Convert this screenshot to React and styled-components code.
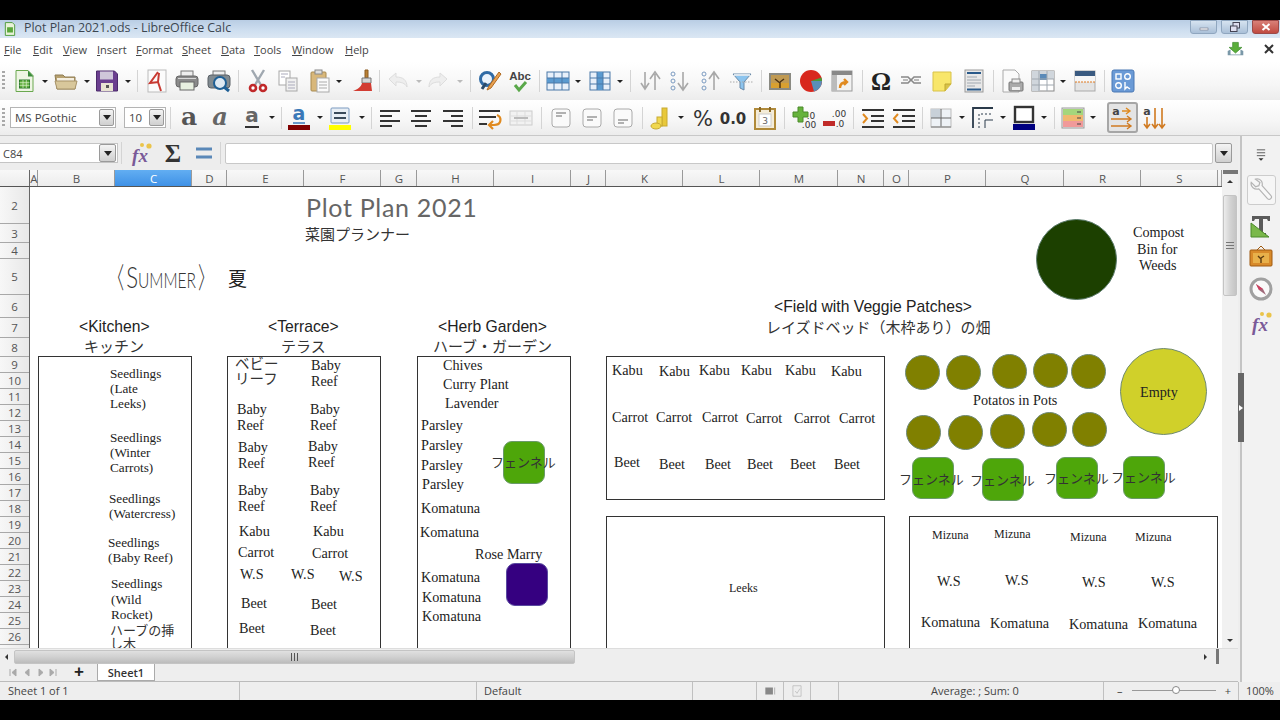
import React from 'react';
import styled, { createGlobalStyle } from 'styled-components';

const Global = createGlobalStyle`
  html, body { margin: 0; padding: 0; background: #000; }
  #root { width: 1280px; height: 720px; overflow: hidden; }
`;
const UI = `"Open Sans", "Noto Sans", sans-serif`;
const JP = `"Noto Sans CJK JP", sans-serif`;

const Page = styled.div`
  width: 1280px; height: 720px; display: flex; flex-direction: column;
  background: #000; font-family: ${UI}; color: #444; overflow: hidden;
`;
const Letterbox = styled.div` height: 20px; flex: none; background: #000; `;
const TitleBar = styled.div`
  height: 18px; flex: none; display: flex; align-items: center; position: relative;
  background: linear-gradient(180deg, #b9cde4 0%, #cfdff0 60%, #dbe7f3 100%);
  font-size: 12.4px; color: #3c4650; padding-left: 3px;
`;
const TitleText = styled.span` margin-left: 7px; margin-top: -3px; `;
const WinButtons = styled.div` margin-left: auto; display: flex; gap: 4px; align-self: flex-start; margin-right: 1px; `;
const WinButton = styled.div`
  width: 27px; height: 14px; border: 1px solid ${p => (p.$close ? '#9c4a48' : '#8fa6bf')}; box-sizing: border-box;
  border-radius: 0 0 3px 3px; display: flex; align-items: center; justify-content: center;
  background: ${p => (p.$close ? 'linear-gradient(180deg,#d98078,#c04a40)' : 'linear-gradient(180deg,#d6e3f0,#aac0d8)')};
`;
const MenuBar = styled.div`
  height: 24px; flex: none; background: #fff; display: flex; align-items: center; font-size: 11px; color: #444;
  padding-bottom: 2px; box-sizing: border-box;
`;
const MenuItem = styled.span`
  width: ${p => p.$w}px; flex: none;
  &::first-letter { text-decoration: underline; }
`;
const MenuEnd = styled.div` margin-left: auto; display: flex; align-items: center; gap: 17px; padding-right: 3px; `;
const ToolRow = styled.div`
  height: ${p => p.$h}px; flex: none; display: flex; align-items: center;
  background: linear-gradient(180deg, #ffffff 0%, #f6f6f6 60%, #ececec 100%);
  border-bottom: ${p => (p.$last ? '1px solid #c8c8c8' : 'none')}; box-sizing: border-box;
`;
const Slot = styled.div`
  flex: none; display: flex; align-items: center; justify-content: center;
  width: ${p => p.$w}px; margin-left: ${p => p.$ml}px;
`;
const Grip = styled.div`
  width: 3px; height: 20px;
  background: repeating-linear-gradient(180deg, #a8a8a8 0 2px, transparent 2px 4px);
`;
const Sep = styled.div` width: 1px; height: 22px; background: #d4d4d4; `;
const Caret = styled.div`
  width: 0; height: 0; border-left: 3px solid transparent; border-right: 3px solid transparent;
  border-top: 3px solid ${p => (p.$dim ? '#bbb' : '#222')};
`;
const Combo = styled.div`
  width: ${p => p.$w}px; height: 21px; box-sizing: border-box; border: 1px solid #b4b4b4; background: #fff;
  display: flex; align-items: center; justify-content: space-between; font-size: 11.5px; color: #444;
  padding: 0 1px 0 4px;
`;
const DropBtn = styled.div`
  width: ${p => p.$w || 15}px; height: ${p => p.$h || 17}px; flex: none; box-sizing: border-box; border: 1px solid #9a9a9a; border-radius: 2px;
  background: linear-gradient(180deg, #f4f4f4, #cfcfcf); display: flex; align-items: center; justify-content: center;
`;
const DropTri = styled.div`
  width: 0; height: 0; border-left: 4px solid transparent; border-right: 4px solid transparent; border-top: 5px solid #222;
`;
const Active = styled.div`
  width: 31px; height: 31px; box-sizing: border-box; border: 2px solid #a6a6a6; border-radius: 3px; background: #e4e4e4;
  display: flex; align-items: center; justify-content: center;
`;
const Work = styled.div` flex: none; height: 546px; display: flex; background: #eee; `;
const MainCol = styled.div` width: 1238px; flex: none; display: flex; flex-direction: column; `;
const FormulaBar = styled.div`
  height: 34px; flex: none; display: flex; align-items: center; background: #ededed;
`;
const NameBox = styled.div`
  width: 118px; height: 20px; flex: none; box-sizing: border-box; border: 1px solid #c4c4c4; border-left: none; background: #fff;
  display: flex; align-items: center; justify-content: space-between; padding-left: 3px; padding-right: 1px; font-size: 11px; color: #444;
`;
const FormulaInput = styled.div`
  width: 988px; height: 21px; flex: none; margin-left: 4px; box-sizing: border-box; border: 1px solid #c8c8c8; border-radius: 2px; background: #fff;
`;
const SheetRow = styled.div` flex: 1; min-height: 0; display: flex; `;
const SheetCol = styled.div` width: 1222px; flex: none; display: flex; flex-direction: column; `;
const ColHeaders = styled.div`
  height: 17px; flex: none; display: flex; background: linear-gradient(180deg, #f8f8f8, #ececec); border-bottom: 1px solid #555; box-sizing: border-box;
`;
const Corner = styled.div` width: 30px; flex: none; border-right: 1px solid #666; box-sizing: border-box; `;
const ColCell = styled.div`
  width: ${p => p.$w}px; flex: none; box-sizing: border-box; border-right: 1px solid #9a9a9a; padding-left: 1px;
  display: flex; align-items: center; justify-content: center; font-size: 11.5px;
  color: ${p => (p.$on ? '#fff' : '#555')};
  background: ${p => (p.$on ? 'linear-gradient(180deg,#62aef2,#3f91e6)' : 'transparent')};
`;
const SheetBody = styled.div` flex: 1; min-height: 0; display: flex; `;
const RowHeaders = styled.div`
  width: 30px; flex: none; box-sizing: border-box; overflow: hidden; border-right: 1px solid #666;
  background: linear-gradient(90deg, #f7f7f7, #e8e8e8);
`;
const RowCell = styled.div`
  height: ${p => p.$h}px; box-sizing: border-box; border-bottom: 1px solid #a8a8a8;
  display: flex; align-items: center; justify-content: center; font-size: 11.5px; color: #555;
`;
const Canvas = styled.div` flex: 1; position: relative; overflow: hidden; background: #fff; `;
const Box = styled.div`
  position: absolute; left: ${p => p.$x}px; top: ${p => p.$y}px; width: ${p => p.$w}px; height: ${p => p.$h}px;
  box-sizing: border-box; border: 1px solid #333; background: #fff;
`;
const Circle = styled.div`
  position: absolute; left: ${p => p.$cx - p.$r}px; top: ${p => p.$cy - p.$r}px; width: ${p => 2 * p.$r}px; height: ${p => 2 * p.$r}px;
  box-sizing: border-box; border-radius: 50%; background: ${p => p.$c}; border: 1px solid ${p => p.$b};
`;
const Pot = styled.div`
  position: absolute; left: ${p => p.$x}px; top: ${p => p.$y}px; width: ${p => p.$w}px; height: ${p => p.$h}px;
  box-sizing: border-box; border-radius: 9px; background: ${p => p.$c}; border: 1px solid ${p => p.$b};
`;
const KIND = {
  serif: `font: 14.2px/16px "Liberation Serif", serif; color: #222;`,
  seed: `font: 13.2px/15px "Liberation Serif", serif; color: #222;`,
  small: `font: 12px/16px "Liberation Serif", serif; color: #222;`,
  sans: `font: 15.7px/18px "Liberation Sans", sans-serif; color: #222;`,
  jp: `font: 400 14.5px/14px ${JP}; color: #333;`,
  jps: `font: 400 13px/13px ${JP}; color: #333;`,
  jpl: `font: 400 15px/18px ${JP}; color: #333;`,
  jpx: `font: 400 19px/22px ${JP}; color: #222;`,
  head: `font: 400 25px/30px "Lato", sans-serif; color: #666; letter-spacing: .7px;`,
};
const Label = styled.div`
  position: absolute; left: ${p => p.$x}px; top: ${p => p.$y}px; white-space: nowrap;
  transform: translateY(-50%); ${p => KIND[p.$k]}
`;
const Summer = styled.div`
  position: absolute; left: 74px; top: 89px; white-space: nowrap; transform-origin: left center;
  transform: translateY(-50%) scaleX(.74); font: 300 30px/32px "Lato", sans-serif; color: #333;
  font-variant: small-caps;
`;
const VScroll = styled.div`
  width: 16px; flex: none; background: #f1f1f1; display: flex; flex-direction: column; align-items: center; position: relative;
`;
const SplitMark = styled.div` width: 15px; height: 4px; background: #777; flex: none; `;
const Arrow = styled.div`
  width: 0; height: 0; flex: none;
  border-left: 3px solid transparent; border-right: 3px solid transparent;
  ${p => (p.$dir === 'up' ? 'border-bottom: 3px solid #333;' : 'border-top: 3px solid #333;')}
  margin: ${p => p.$m};
`;
const VThumb = styled.div`
  width: 14px; height: 101px; flex: none; box-sizing: border-box; border: 1px solid #c4c4c4; border-radius: 2px;
  background: linear-gradient(90deg, #ececec, #d4d4d4 50%, #c4c4c4);
  display: flex; align-items: center; justify-content: center;
`;
const VTrack = styled.div` flex: 1; `;
const Handle = styled.div`
  position: absolute; right: -6px; top: 203px; width: 6px; height: 69px; background: #666; z-index: 2;
  display: flex; align-items: center; justify-content: center;
  &::after { content: ''; border-left: 4px solid #fff; border-top: 3px solid transparent; border-bottom: 3px solid transparent; }
`;
const HScroll = styled.div`
  height: 16px; flex: none; display: flex; align-items: center; background: #eee; border-top: 1px solid #ddd; box-sizing: border-box;
`;
const HArrow = styled.div`
  width: 0; height: 0; flex: none; border-top: 3px solid transparent; border-bottom: 3px solid transparent;
  ${p => (p.$dir === 'l' ? 'border-right: 3px solid #333;' : 'border-left: 3px solid #333;')}
  margin-left: ${p => p.$ml}px;
`;
const HThumb = styled.div`
  width: 561px; height: 14px; flex: none; margin-left: 6px; box-sizing: border-box; border: 1px solid #c4c4c4; border-radius: 2px;
  background: linear-gradient(180deg, #e0e0e0, #d0d0d0 50%, #bcbcbc);
  display: flex; align-items: center; justify-content: center;
`;
const SplitBar = styled.div` width: 3px; height: 15px; background: #777; margin-left: 9px; flex: none; `;
const TabRow = styled.div`
  height: 18px; flex: none; display: flex; align-items: flex-start; background: #eee; border-bottom: 1px solid #bbb; box-sizing: border-box; position: relative;
`;
const Nav = styled.svg` width: 60px; height: 17px; flex: none; margin-left: 6px; `;
const Plus = styled.div` width: 24px; margin-left: 1px; flex: none; text-align: center; font: 700 17px/16px "Liberation Sans", sans-serif; color: #222; `;
const Tab = styled.div`
  width: 58px; height: 17px; flex: none; margin-left: 6px; box-sizing: border-box; background: #fff; border: 1px solid #aaa; border-top: none;
  display: flex; align-items: center; justify-content: center; font-size: 11px; font-weight: 600; color: #333;
`;
const Side = styled.div`
  flex: 1; box-sizing: border-box; border-left: 2px solid #c4c4c4; margin-left: 2px; background: #f2f2f2; position: relative;
  display: flex; flex-direction: column; align-items: center; padding-top: 8px;
`;
const SideIcon = styled.div`
  width: ${p => p.$boxed ? 29 : 26}px; height: ${p => p.$h}px; box-sizing: border-box; margin-top: ${p => p.$mt}px; flex: none;
  display: flex; align-items: center; justify-content: center;
  ${p => p.$boxed && 'border: 1px solid #ccc; border-radius: 3px; background: #f6f6f6;'}
`;
const StatusBar = styled.div`
  height: 18px; flex: none; display: flex; align-items: center; background: #eee; font-size: 11px; color: #444;
`;
const StatusCell = styled.div`
  width: ${p => p.$w}px; flex: none; height: 100%; box-sizing: border-box; display: flex; align-items: center; justify-content: ${p => p.$c ? 'center' : 'flex-start'};
  padding-left: ${p => p.$pl || 0}px; padding-bottom: 1px; border-right: ${p => (p.$noBorder ? 'none' : '1px solid #c0c0c0')};
`;
const ZoomTrack = styled.div` flex: 1; height: 1px; background: #999; position: relative; margin: 0 9px; `;
const ZoomKnob = styled.div`
  position: absolute; left: 40px; top: -4px; width: 8px; height: 8px; border-radius: 50%; border: 1px solid #888; background: #fff; box-sizing: border-box;
`;
const ZoomGap = styled.span` width: 7px; flex: none; `;
const IconSvg = styled.svg` overflow: visible; flex: none; `;

/* ---------- icons ---------- */
const Svg = ({ s = 24, children }) => <IconSvg width={s} height={s} viewBox="0 0 24 24" fill="none">{children}</IconSvg>;
const lines = (arr, c = '#333', w = 2) => arr.map(([x1, y, x2], i) => <path key={i} d={`M${x1} ${y}H${x2}`} stroke={c} strokeWidth={w} />);
const A = ({ x = 12, y = 15, c = '#666', style = 'normal', w = 700, s = 19, f = 'DejaVu Sans, sans-serif' }) => (
  <text x={x} y={y} textAnchor="middle" fontSize={s} fontWeight={w} fontStyle={style} fontFamily={f} fill={c}>a</text>
);
const I = {
  newDoc: <><path d="M3 1.5h12l5 5v16H3z" fill="#eef5e4" stroke="#6aa84f" /><path d="M15 1.5v6h5.5z" fill="#3c8c3c" /><rect x="6.5" y="11" width="10" height="8" fill="#5fae3c" stroke="#2c7a2c" /><path d="M6.5 13.7h10M6.5 16.3h10M10 11v8M13.3 11v8" stroke="#dff0d0" strokeWidth=".7" /></>,
  open: <><path d="M1 6h8l2 2h10v12H3z" fill="#b7a16f" stroke="#8f7d54" /><path d="M3 9h17v4H3z" fill="#f4eee0" /><path d="M1 12h22l-2 8H3z" fill="#d8c79b" stroke="#a79369" /></>,
  save: <><path d="M1.5 2h18l3 3v17h-21z" fill="#6b3f8f" stroke="#4b2a6b" /><rect x="5" y="2.5" width="13" height="8" fill="#cfc6da" /><rect x="6" y="14" width="12" height="8" fill="#e8e3d2" /><rect x="11" y="16" width="3" height="3" fill="#555" /></>,
  pdf: <><rect x="3" y="1" width="18" height="22" fill="#fbfbfb" stroke="#bbb" /><path d="M13 3 5 14l9-1M14 4l-1 9 3 9" stroke="#c83a32" strokeWidth="2" /></>,
  print: <><rect x="6" y="2" width="12" height="6" fill="#eee" stroke="#777" /><rect x="1" y="7" width="22" height="11" rx="3" fill="#8a8a8a" stroke="#666" /><rect x="5" y="13" width="14" height="8" fill="#e8f0e0" stroke="#666" /><path d="M3 9.5h18" stroke="#d8d8d8" /></>,
  preview: <><rect x="6" y="2" width="12" height="6" fill="#eee" stroke="#777" /><rect x="1" y="6" width="22" height="13" rx="3" fill="#808a90" stroke="#5a6066" /><circle cx="13" cy="14" r="6" fill="#dde8f2" stroke="#1e5f95" strokeWidth="2" /><path d="M17 18l5 4" stroke="#1e5f95" strokeWidth="3" /></>,
  cut: <><path d="M6 1l9 15M18 1L9 16" stroke="#a0a8b0" strokeWidth="2.4" /><circle cx="7" cy="19" r="3" fill="#fff" stroke="#c0282a" strokeWidth="2.6" /><circle cx="17" cy="19" r="3" fill="#fff" stroke="#c0282a" strokeWidth="2.6" /></>,
  copy: <><rect x="3" y="2" width="11" height="14" fill="#fff" stroke="#a8a8a8" /><rect x="10" y="9" width="11" height="13" fill="#f0f0f0" stroke="#a8a8a8" /><path d="M5 5h7M5 8h4M12 13h7M12 16h7M12 19h7" stroke="#aab" /></>,
  paste: <><rect x="3" y="3" width="15" height="19" rx="1" fill="#d8b77a" stroke="#a88a50" /><rect x="7" y="1" width="7" height="4" fill="#ddd" stroke="#888" /><rect x="9" y="9" width="12" height="14" fill="#fafafa" stroke="#aaa" /><path d="M11 13h8M11 16h8M11 19h8" stroke="#aaa" /></>,
  brush: <><path d="M15 1h3v8h-3z" fill="#b98035" stroke="#8a5a20" /><path d="M12 9h9v5h-9z" fill="#d6d6d6" stroke="#777" /><path d="M12 14h9l1 8H3c5-2 8-4 9-8z" fill="#d23c32" /></>,
  undo: <><path d="M3 10l7-6v4c7 0 11 3 11 10-2-4-6-5-11-5v4z" fill="#eee" stroke="#ddd" /></>,
  redo: <><path d="M21 10l-7-6v4C7 8 3 11 3 18c2-4 6-5 11-5v4z" fill="#eee" stroke="#ddd" /></>,
  find: <><circle cx="9" cy="10" r="6.5" fill="#eaf2fb" stroke="#2f6aa5" strokeWidth="3" /><path d="M4 20l4-6" stroke="#2a4a6a" strokeWidth="3" /><path d="M21 3 11 17l-2 4 4-2L23 5z" fill="#e8a050" stroke="#b06a20" /></>,
  spell: <><text x="12" y="11" textAnchor="middle" fontSize="11.5" fontWeight="700" fontFamily="Liberation Sans, sans-serif" fill="#444">Abc</text><path d="M7 16l4 5 7-8" stroke="#5aa84a" strokeWidth="3" /></>,
  rows: <><rect x="1" y="3" width="22" height="18" fill="#e8f0fa" stroke="#4a78a8" /><rect x="1" y="9" width="22" height="5" fill="#5a9ad0" /><path d="M1 9h22M1 14h22M8 3v18M16 3v18" stroke="#4a78a8" /></>,
  cols: <><rect x="2" y="3" width="20" height="18" fill="#e8f0fa" stroke="#4a78a8" /><rect x="9" y="3" width="6" height="18" fill="#5a9ad0" /><path d="M2 9h20M2 15h20M9 3v18M15 3v18" stroke="#4a78a8" /></>,
  sort: <><path d="M7 3v16M3 14l4 6 4-6" stroke="#a8a8a8" strokeWidth="1.6" /><path d="M17 21V5M12 10l5-7 5 7" stroke="#a8a8a8" strokeWidth="1.6" /></>,
  sortD: <><circle cx="5" cy="5" r="2" stroke="#7a9ac0" /><circle cx="5" cy="12" r="2" stroke="#7a9ac0" /><circle cx="5" cy="19" r="2" stroke="#7a9ac0" /><path d="M15 3v17M10 14l5 7 5-7" stroke="#a8a8a8" strokeWidth="1.6" /></>,
  sortA: <><circle cx="5" cy="5" r="2" stroke="#7a9ac0" /><circle cx="5" cy="12" r="2" stroke="#7a9ac0" /><circle cx="5" cy="19" r="2" stroke="#7a9ac0" /><path d="M15 21V4M10 10l5-7 5 7" stroke="#a8a8a8" strokeWidth="1.6" /></>,
  filter: <><path d="M3 5h18l-7 8v8l-4-2v-6z" fill="#8cc4ee" stroke="#6a8aa8" /><path d="M0 13h24" stroke="#aaa" strokeDasharray="1.5 1.5" /><rect x="4" y="5" width="16" height="2" fill="#d8e4ee" /></>,
  image: <><rect x="1" y="4" width="22" height="17" fill="#8a8a82" /><rect x="3" y="6" width="18" height="13" fill="#c09a52" /><rect x="3" y="14" width="18" height="5" fill="#d8a030" /><path d="M12 19v-6M12 14l-5-4M12 13l4-3" stroke="#4a3010" strokeWidth="1.4" /></>,
  chart: <><circle cx="12" cy="12" r="11" fill="#d8271d" /><path d="M12 12h11a11 11 0 0 1-8 10.6z" fill="#5a8fb8" /><path d="M12 12h11a11 11 0 0 0-.6-3.5z" fill="#4a9a3a" /></>,
  pivot: <><rect x="2" y="2" width="20" height="20" fill="#f2f2f2" stroke="#999" /><rect x="2" y="2" width="20" height="4" fill="#888" /><rect x="2" y="6" width="5" height="16" fill="#bbb" /><path d="M10 19c0-4 2-6 7-6M14 10l3 3-3 3" stroke="#e08a20" strokeWidth="2.4" /></>,
  omega: <text x="12" y="21" textAnchor="middle" fontSize="25" fontWeight="700" fontFamily="Liberation Serif, serif" fill="#222">Ω</text>,
  link: <><path d="M2 8h7l3 3 3-3h7M2 14h7l3-3 3 3h7" stroke="#888" strokeWidth="1.6" /><path d="M4 11h5M15 11h5" stroke="#bbb" strokeWidth="2" /></>,
  note: <><path d="M3 3h18v12l-6 7H3z" fill="#f8e66a" stroke="#d8c24a" /><path d="M15 22v-7h6" fill="#d8c24a" stroke="#c0a830" /></>,
  header: <><rect x="3" y="1" width="18" height="22" fill="#e8e8e8" stroke="#999" /><path d="M5 4h14" stroke="#2a5a8a" strokeWidth="2" /><path d="M5 8h10M5 11h14M5 14h14M5 17h8" stroke="#a0a8b0" /><path d="M5 20.5h14" stroke="#2a5a8a" strokeWidth="2" /></>,
  docs: <><path d="M3 1h12l4 4v18H3z" fill="#fafafa" stroke="#aaa" /><rect x="9" y="13" width="14" height="9" rx="1" fill="#aaa" stroke="#777" /><rect x="12" y="10" width="8" height="4" fill="#eee" stroke="#888" /><rect x="12" y="18" width="8" height="3" fill="#eee" /></>,
  freeze: <><rect x="1" y="2" width="22" height="20" fill="#fff" stroke="#888" /><rect x="1" y="2" width="8" height="20" fill="#d0d6dc" /><rect x="1" y="2" width="22" height="8" fill="#d0d6dc" /><rect x="9" y="5" width="7" height="6" fill="#5a8ab8" /><path d="M8 2v20M16 2v20M1 10h22M1 16h22" stroke="#a0a8b0" /></>,
  split: <><rect x="2" y="2" width="20" height="20" fill="#e4e4e4" stroke="#aaa" /><rect x="2" y="2" width="20" height="5" fill="#3a5a80" /><rect x="2" y="7" width="20" height="6" fill="#f6f6f6" /><path d="M2 13h20" stroke="#e07a20" strokeDasharray="2 1" /></>,
  shapes: <><rect x="1" y="1" width="22" height="22" rx="2" fill="#6a9ad6" stroke="#4a78b4" /><rect x="5" y="5" width="5" height="5" fill="none" stroke="#fff" strokeWidth="1.4" /><circle cx="16.5" cy="7.5" r="2.8" stroke="#fff" strokeWidth="1.4" /><circle cx="7.5" cy="16.5" r="2.8" stroke="#fff" strokeWidth="1.4" /><path d="M14 13v7l2-2 3 2" stroke="#fff" strokeWidth="1.4" /></>,
  bold: <A c="#555" s={25} w={700} y={19} f="DejaVu Serif, serif" />,
  italic: <A c="#666" style="italic" w={700} s={24} y={19} f="DejaVu Serif, serif" />,
  under: <><A c="#666" s={20} y={16} f="DejaVu Sans, sans-serif" w={700} /><path d="M5 21h14" stroke="#333" strokeWidth="2" /></>,
  fcolor: <><A c="#3a78b8" s={19} y={14} /><path d="M6 17h12" stroke="#3a78b8" strokeWidth="1.5" /><rect x="1" y="19" width="22" height="5" fill="#800000" /></>,
  hl: <><rect x="3" y="2" width="18" height="15" rx="1" fill="#e8eef4" stroke="#7a9ac0" /><path d="M6 7h12M6 12h12" stroke="#3a4a5a" strokeWidth="2" /><rect x="1" y="19" width="22" height="5" fill="#ffff00" /></>,
  alignL: lines([[2, 5, 22], [2, 10, 14], [2, 15, 22], [2, 20, 14]]),
  alignC: lines([[2, 5, 22], [6, 10, 18], [2, 15, 22], [6, 20, 18]]),
  alignR: lines([[2, 5, 22], [10, 10, 22], [2, 15, 22], [10, 20, 22]]),
  wrap: <>{lines([[1, 5, 22], [1, 11, 18], [1, 18, 9]])}<path d="M19 9c5 2 5 10-3 10h-4M15 15l-4 4 4 4" stroke="#e08a20" strokeWidth="2.2" /></>,
  merge: <><rect x="1" y="5" width="22" height="14" fill="#f2f2f2" stroke="#ccc" /><path d="M1 10h22M1 15h22M8 5v14M16 5v14" stroke="#ddd" /><path d="M5 12h14" stroke="#bbb" strokeWidth="2" /></>,
  vtop: <><rect x="3" y="3" width="18" height="18" rx="3" fill="#fafafa" stroke="#aaa" /><path d="M7 7h10M7 10h6" stroke="#999" strokeWidth="1.4" /></>,
  vmid: <><rect x="3" y="3" width="18" height="18" rx="3" fill="#fafafa" stroke="#aaa" /><path d="M7 11h10M7 14h6" stroke="#999" strokeWidth="1.4" /></>,
  vbot: <><rect x="3" y="3" width="18" height="18" rx="3" fill="#fafafa" stroke="#aaa" /><path d="M7 14h10M7 17h6" stroke="#999" strokeWidth="1.4" /></>,
  coins: <><rect x="13" y="2" width="5" height="18" fill="#e8c83a" stroke="#c8aa30" /><rect x="8" y="11" width="5" height="9" fill="#f0d850" stroke="#c8aa30" /><ellipse cx="7" cy="20" rx="5" ry="3" fill="#f0d850" stroke="#c8aa30" /></>,
  percent: <text x="12" y="20" textAnchor="middle" fontSize="21" fontFamily="DejaVu Sans, sans-serif" fill="#333">%</text>,
  zero: <text x="12" y="18" textAnchor="middle" fontSize="15" fontWeight="700" fontFamily="DejaVu Sans, sans-serif" fill="#333">0.0</text>,
  date: <><rect x="2" y="3" width="20" height="20" fill="#f4ecd8" stroke="#b08a3a" strokeWidth="2" /><rect x="6" y="8" width="12" height="12" fill="#fff" stroke="#ccc" /><path d="M7 1v5M17 1v5" stroke="#8a6a2a" strokeWidth="2" /><text x="12" y="18" textAnchor="middle" fontSize="9" fontFamily="DejaVu Sans, sans-serif" fill="#666">3</text></>,
  addDec: <><path d="M8 1h5v5h5v5h-5v5H8v-5H3V6h5z" fill="#66b33c" stroke="#4a8a2a" /><text x="21" y="13" textAnchor="middle" fontSize="9" fontFamily="DejaVu Sans, sans-serif" fill="#333">.0</text><text x="19" y="22" textAnchor="middle" fontSize="9" fontFamily="DejaVu Sans, sans-serif" fill="#333">.00</text></>,
  delDec: <><rect x="2" y="15" width="12" height="5" fill="#c02a28" /><text x="18" y="11" textAnchor="middle" fontSize="9" fontFamily="DejaVu Sans, sans-serif" fill="#333">.00</text><text x="19" y="21" textAnchor="middle" fontSize="9" fontFamily="DejaVu Sans, sans-serif" fill="#333">.0</text></>,
  indent: <>{lines([[1, 4, 23], [10, 10, 23], [10, 15, 23], [1, 21, 23]])}<path d="M2 8l4 4.5-4 4.5" stroke="#e08a20" strokeWidth="2" /></>,
  outdent: <>{lines([[1, 4, 23], [10, 10, 23], [10, 15, 23], [1, 21, 23]])}<path d="M6 8l-4 4.5 4 4.5" stroke="#e08a20" strokeWidth="2" /></>,
  borders: <><rect x="2" y="3" width="20" height="18" fill="#eef2f6" stroke="#bbb" /><rect x="2" y="3" width="9" height="9" fill="#c8d0d8" /><path d="M12 3v18M2 12h20" stroke="#666" /><path d="M2 21h20" stroke="#999" strokeWidth="1.5" /></>,
  bstyle: <><path d="M2 22V2h20" stroke="#2a3a4a" strokeWidth="1.8" /><path d="M8 22V8h14" stroke="#2a3a4a" strokeDasharray="2 2" /><path d="M14 22v-8h8" stroke="#2a3a4a" /></>,
  bcolor: <><rect x="3" y="1" width="18" height="15" fill="#fff" stroke="#333" strokeWidth="2.4" /><rect x="1" y="18" width="22" height="6" fill="#000080" /></>,
  cond: <><rect x="1" y="2" width="22" height="20" fill="#eee" stroke="#999" /><rect x="2" y="3" width="20" height="6" fill="#a4d67c" /><rect x="2" y="9" width="20" height="6" fill="#f0b870" /><rect x="2" y="15" width="20" height="6" fill="#f09a9a" /><path d="M16 6h4M16 12h4M16 18h4" stroke="#444" /></>,
  sortH: <><A x={6} y={9} s={11} c="#444" /><path d="M12 5h7M16 2l4 3-4 3" stroke="#e08a20" strokeWidth="1.4" /><path d="M1 13h20M17 10l4 3-4 3M1 20h20M17 17l4 3-4 3" stroke="#d07a20" strokeWidth="1.4" /></>,
  sortV: <><A x={5} y={9} s={11} c="#444" /><path d="M5 11v11M2 18l3 4 3-4M13 2v20M10 18l3 4 3-4M20 2v20M17 18l3 4 3-4" stroke="#d07a20" strokeWidth="1.6" /></>,
  wrench: <><path d="M3 5l4 4 3-1 1-3-4-3c4-1 7 2 6 6l8 9c2 2-1 5-3 3l-8-9C6 12 2 9 3 5z" fill="#f8f8f8" stroke="#b4b4b4" strokeWidth="1.1" /></>,
  styleT: <><path d="M5 2h16v5h-2l-1-2h-4v14h3v3H7v-3h3V5H6L5 7H3V2z" fill="#5a5a5a" /><path d="M2 9l18 14H2z" fill="#7ab84a" stroke="#4a8a2a" /></>,
  gallery: <><rect x="1" y="6" width="22" height="16" rx="1" fill="#d88a2a" stroke="#a05a10" /><rect x="4" y="9" width="16" height="10" fill="#e8b04a" /><path d="M12 19v-5M12 15l-3-3M12 14l3-2" stroke="#5a3a10" strokeWidth="1.4" /><path d="M8 6l4-4 4 4" stroke="#a05a10" /></>,
  compass: <><circle cx="12" cy="12" r="10" fill="#fafafa" stroke="#a0a0a0" strokeWidth="3" /><path d="M7 7l7 5 3 6-7-5z" fill="#a06a7a" /><path d="M7 7l7 5-4 1z" fill="#d04060" /></>,
  fx: <><text x="11" y="21" textAnchor="middle" fontSize="19" fontStyle="italic" fontWeight="700" fontFamily="Liberation Serif, serif" fill="#7a5a98">fx</text><circle cx="13" cy="4" r="2" fill="#eac44a" /><circle cx="20" cy="5" r="2.6" fill="#eac44a" /></>,
  menuLines: <><path d="M7 7h10M7 10.5h10M7 14h10" stroke="#444" /><path d="M12 20l-3-3h6z" fill="#333" /></>,
  install: <><path d="M8 2h8v7h5l-9 8-9-8h5z" fill="#5aae3a" stroke="#3a8a2a" /><path d="M1 14l4-2v7h14v-7l4 2v6H1z" fill="#7a98a8" /></>,
  closeX: <path d="M6 6l12 12M18 6L6 18" stroke="#333" strokeWidth="3" />,
};
const W = { grip: 3, sep: 1, caret: 6, dim: 6 };
const T1 = [['grip', 3], ['newDoc', 25], ['caret', 45], ['open', 66], ['caret', 87], ['save', 107], ['caret', 128], ['sep', 137], ['pdf', 157], ['print', 187], ['preview', 219], ['sep', 238], ['cut', 258], ['copy', 288], ['paste', 320], ['caret', 339], ['brush', 362], ['sep', 379], ['undo', 398], ['dim', 419], ['redo', 438], ['dim', 460], ['sep', 470], ['find', 490], ['spell', 520], ['sep', 539], ['rows', 558], ['caret', 578], ['cols', 600], ['caret', 620], ['sep', 630], ['sort', 650], ['sortD', 680], ['sortA', 711], ['filter', 742], ['sep', 761], ['image', 780], ['chart', 811], ['pivot', 842], ['sep', 862], ['omega', 881], ['link', 911], ['note', 942], ['header', 974], ['sep', 993], ['docs', 1012], ['freeze', 1043], ['caret', 1063], ['split', 1085], ['sep', 1104], ['shapes', 1123]];
const T2 = [['grip', 3], ['font', 63], ['size', 145], ['sep', 170], ['bold', 189], ['italic', 220], ['under', 252], ['caret', 272], ['sep', 281], ['fcolor', 299], ['caret', 320], ['hl', 340], ['caret', 362], ['sep', 371], ['alignL', 390], ['alignC', 421], ['alignR', 453], ['sep', 472], ['wrap', 490], ['merge', 521], ['sep', 541], ['vtop', 561], ['vmid', 592], ['vbot', 623], ['sep', 642], ['coins', 661], ['caret', 681], ['percent', 703], ['zero', 733], ['date', 765], ['sep', 784], ['addDec', 802], ['delDec', 833], ['sep', 853], ['indent', 873], ['outdent', 904], ['sep', 922], ['borders', 941], ['caret', 962], ['bstyle', 983], ['caret', 1003], ['bcolor', 1024], ['caret', 1044], ['sep', 1054], ['cond', 1073], ['caret', 1093], ['active', 1122], ['sortV', 1154]];
const widthOf = k => (W[k] ? W[k] : k === 'font' ? 106 : k === 'size' ? 42 : k === 'active' ? 31 : 24);
const renderTool = k => {
  if (k === 'grip') return <Grip />;
  if (k === 'sep') return <Sep />;
  if (k === 'caret') return <Caret />;
  if (k === 'dim') return <Caret $dim />;
  if (k === 'font') return <Combo $w={106}>MS PGothic<DropBtn><DropTri /></DropBtn></Combo>;
  if (k === 'size') return <Combo $w={42}>10<DropBtn><DropTri /></DropBtn></Combo>;
  if (k === 'active') return <Active><Svg>{I.sortH}</Svg></Active>;
  return <Svg>{I[k]}</Svg>;
};
const Tools = ({ items }) => {
  let right = 0;
  return items.map(([k, c], i) => {
    const w = widthOf(k);
    const ml = c - w / 2 - right;
    right = c + w / 2;
    return <Slot key={i} $w={w} $ml={ml}>{renderTool(k)}</Slot>;
  });
};
const MENU = [['File', 29], ['Edit', 30], ['View', 34], ['Insert', 39], ['Format', 46], ['Sheet', 39], ['Data', 33], ['Tools', 38], ['Window', 53], ['Help', 40]];
const COLS = [['A', 8], ['B', 77], ['C', 77], ['D', 35], ['E', 77], ['F', 77], ['G', 36], ['H', 77], ['I', 77], ['J', 35], ['K', 77], ['L', 77], ['M', 78], ['N', 46], ['O', 25], ['P', 77], ['Q', 78], ['R', 77], ['S', 77], ['', 4]];
const ROWS = [[2, 37], [3, 19], [4, 16], [5, 36], [6, 23], [7, 20], [8, 19], ...Array.from({ length: 19 }, (_, i) => [i + 9, 16])];

const L = [
  ['Plot Plan 2021', 306, 207, 'head'], ['菜園プランナー', 305, 234, 'jpl'], ['夏', 228, 278, 'jpx'],
  ['<Kitchen>', 79, 327, 'sans'], ['キッチン', 84, 346, 'jpl'], ['<Terrace>', 268, 327, 'sans'], ['テラス', 281, 346, 'jpl'],
  ['<Herb Garden>', 438, 327, 'sans'], ['ハーブ・ガーデン', 433, 346, 'jpl'],
  ['<Field with Veggie Patches>', 774, 307, 'sans'], ['レイズドベッド（木枠あり）の畑', 766, 327, 'jpl'],
  ['Compost', 1133, 232, 'serif'], ['Bin for', 1137, 249, 'serif'], ['Weeds', 1139, 265, 'serif'],
  ['Seedlings', 110, 373, 'seed'], ['(Late', 110, 388, 'seed'], ['Leeks)', 110, 403, 'seed'],
  ['Seedlings', 110, 437, 'seed'], ['(Winter', 110, 452, 'seed'], ['Carrots)', 110, 467, 'seed'],
  ['Seedlings', 109, 498, 'seed'], ['(Watercress)', 109, 513, 'seed'], ['Seedlings', 108, 542, 'seed'], ['(Baby Reef)', 108, 557, 'seed'],
  ['Seedlings', 111, 583, 'seed'], ['(Wild', 111, 599, 'seed'], ['Rocket)', 111, 614, 'seed'], ['ハーブの挿', 110, 629, 'jps'], ['し木', 110, 642, 'jps'],
  ['ベビー', 235, 363, 'jp'], ['リーフ', 235, 378, 'jp'], ['Baby', 311, 365, 'serif'], ['Reef', 311, 381, 'serif'],
  ['Baby', 237, 409, 'serif'], ['Reef', 237, 425, 'serif'], ['Baby', 310, 409, 'serif'], ['Reef', 310, 425, 'serif'],
  ['Baby', 238, 447, 'serif'], ['Reef', 238, 463, 'serif'], ['Baby', 308, 446, 'serif'], ['Reef', 308, 462, 'serif'],
  ['Baby', 238, 490, 'serif'], ['Reef', 238, 506, 'serif'], ['Baby', 310, 490, 'serif'], ['Reef', 310, 506, 'serif'],
  ['Kabu', 239, 531, 'serif'], ['Kabu', 313, 531, 'serif'], ['Carrot', 238, 552, 'serif'], ['Carrot', 312, 553, 'serif'],
  ['W.S', 240, 574, 'serif'], ['W.S', 291, 574, 'serif'], ['W.S', 339, 576, 'serif'],
  ['Beet', 241, 603, 'serif'], ['Beet', 311, 604, 'serif'], ['Beet', 239, 628, 'serif'], ['Beet', 310, 630, 'serif'],
  ['Chives', 443, 365, 'serif'], ['Curry Plant', 443, 384, 'serif'], ['Lavender', 445, 403, 'serif'],
  ['Parsley', 421, 425, 'serif'], ['Parsley', 421, 445, 'serif'], ['Parsley', 421, 465, 'serif'], ['Parsley', 422, 484, 'serif'],
  ['Komatuna', 421, 508, 'serif'], ['Komatuna', 420, 532, 'serif'], ['Rose Marry', 475, 554, 'serif'],
  ['Komatuna', 421, 577, 'serif'], ['Komatuna', 422, 597, 'serif'], ['Komatuna', 422, 616, 'serif'],
  ['Kabu', 612, 370, 'serif'], ['Kabu', 659, 371, 'serif'], ['Kabu', 699, 370, 'serif'], ['Kabu', 741, 370, 'serif'], ['Kabu', 785, 370, 'serif'], ['Kabu', 831, 371, 'serif'],
  ['Carrot', 612, 417, 'serif'], ['Carrot', 656, 417, 'serif'], ['Carrot', 702, 417, 'serif'], ['Carrot', 746, 418, 'serif'], ['Carrot', 794, 418, 'serif'], ['Carrot', 839, 418, 'serif'],
  ['Beet', 614, 462, 'serif'], ['Beet', 659, 464, 'serif'], ['Beet', 705, 464, 'serif'], ['Beet', 747, 464, 'serif'], ['Beet', 790, 464, 'serif'], ['Beet', 834, 464, 'serif'],
  ['Leeks', 729, 588, 'small'], ['Potatos in Pots', 973, 400, 'serif'], ['Empty', 1140, 392, 'serif'],
  ['Mizuna', 932, 535, 'small'], ['Mizuna', 994, 534, 'small'], ['Mizuna', 1070, 537, 'small'], ['Mizuna', 1135, 537, 'small'],
  ['W.S', 937, 581, 'serif'], ['W.S', 1005, 580, 'serif'], ['W.S', 1082, 582, 'serif'], ['W.S', 1151, 582, 'serif'],
  ['Komatuna', 921, 622, 'serif'], ['Komatuna', 990, 623, 'serif'], ['Komatuna', 1069, 624, 'serif'], ['Komatuna', 1138, 623, 'serif'],
];
const FENNEL = [[491, 461], [899, 478], [970, 479], [1044, 477], [1111, 476]];
const BOXES = [[38, 356, 154, 320], [227, 356, 154, 320], [417, 356, 154, 320], [606, 356, 279, 144], [606, 516, 279, 200], [909, 516, 309, 200]];
const POTATOES = [[922, 372], [963, 372], [1009, 371], [1050, 370], [1088, 371], [923, 432], [965, 432], [1007, 431], [1049, 429], [1089, 429]];
const GREENS = [[503, 441, 42, 43], [912, 457, 42, 42], [982, 458, 42, 43], [1056, 457, 42, 42], [1123, 456, 42, 43]];
const OX = 30, OY = 187;

export default function App() {
  return (
    <Page>
      <Global />
      <Letterbox />
      <TitleBar>
        <Svg s={14}><path d="M4 1h12l4 4v18H4z" fill="#e8f2d8" stroke="#4a9a3a" strokeWidth="1.6" /><rect x="7" y="9" width="10" height="9" fill="#5aa83a" /></Svg>
        <TitleText>Plot Plan 2021.ods - LibreOffice Calc</TitleText>
        <WinButtons>
          <WinButton><Svg s={12}><rect x="4" y="14" width="16" height="4" fill="#f0f4f8" stroke="#667" /></Svg></WinButton>
          <WinButton><Svg s={12}><rect x="8" y="3" width="13" height="11" fill="#dde" stroke="#445" strokeWidth="2" /><rect x="3" y="10" width="13" height="11" fill="#dde" stroke="#445" strokeWidth="2" /></Svg></WinButton>
          <WinButton $close><Svg s={12}><path d="M5 6l14 12M19 6L5 18" stroke="#fff" strokeWidth="4" /></Svg></WinButton>
        </WinButtons>
      </TitleBar>
      <MenuBar>
        <MenuItem $w={4} />
        {MENU.map(([t, w]) => <MenuItem key={t} $w={w}>{t}</MenuItem>)}
        <MenuEnd>
          <Svg s={17}>{I.install}</Svg>
          <Svg s={16}>{I.closeX}</Svg>
        </MenuEnd>
      </MenuBar>
      <ToolRow $h={38}><Tools items={T1} /></ToolRow>
      <ToolRow $h={36} $last><Tools items={T2} /></ToolRow>
      <Work>
        <MainCol>
          <FormulaBar>
            <NameBox>C84<DropBtn $h={18} $w={17}><DropTri /></DropBtn></NameBox>
            <Slot $w={1} $ml={3}><Sep /></Slot>
            <Slot $w={24} $ml={7}><Svg>{I.fx}</Svg></Slot>
            <Slot $w={24} $ml={8}><Svg><text x="12" y="21" textAnchor="middle" fontSize="25" fontWeight="700" fontFamily="Liberation Serif, serif" fill="#333">Σ</text></Svg></Slot>
            <Slot $w={24} $ml={7}><Svg><path d="M4 8h16M4 16h16" stroke="#5a88b8" strokeWidth="3" /></Svg></Slot>
            <Slot $w={1} $ml={4}><Sep /></Slot>
            <FormulaInput />
            <Slot $w={17} $ml={2}><DropBtn $w={17} $h={20}><DropTri /></DropBtn></Slot>
          </FormulaBar>
          <SheetRow>
            <SheetCol>
              <ColHeaders>
                <Corner />
                {COLS.map(([c, w], i) => <ColCell key={i} $w={w} $on={c === 'C'}>{c}</ColCell>)}
              </ColHeaders>
              <SheetBody>
                <RowHeaders>
                  {ROWS.map(([n, h]) => <RowCell key={n} $h={h}>{n}</RowCell>)}
                </RowHeaders>
                <Canvas>
                  {BOXES.map(([x, y, w, h], i) => <Box key={i} $x={x - OX} $y={y - OY} $w={w} $h={h} />)}
                  <Circle $cx={1076 - OX} $cy={259 - OY} $r={40.5} $c="#1c4000" $b="#5a7a6a" />
                  <Circle $cx={1163 - OX} $cy={391 - OY} $r={43.5} $c="#d0d02a" $b="#6f8a70" />
                  {POTATOES.map(([x, y], i) => <Circle key={i} $cx={x - OX} $cy={y - OY} $r={17.5} $c="#808000" $b="#6f8a7a" />)}
                  {GREENS.map(([x, y, w, h], i) => <Pot key={i} $x={x - OX} $y={y - OY} $w={w} $h={h} $c="#4ea60a" $b="#6a9a6a" />)}
                  <Pot $x={506 - OX} $y={563 - OY} $w={42} $h={43} $c="#350080" $b="#5a4aa0" />
                  {L.map(([t, x, y, k], i) => <Label key={i} $x={x - OX} $y={y - OY} $k={k}>{t}</Label>)}
                  {FENNEL.map(([x, y], i) => <Label key={i} $x={x - OX} $y={y - OY} $k="jps">フェンネル</Label>)}
                  <Summer>〈Summer〉</Summer>
                </Canvas>
              </SheetBody>
            </SheetCol>
            <VScroll>
              <SplitMark />
              <Arrow $dir="up" $m="6px 0 12px" />
              <VThumb><svg width="8" height="7" viewBox="0 0 8 7"><path d="M0 .5h8M0 3.5h8M0 6.5h8" stroke="#777" /></svg></VThumb>
              <VTrack />
              <Arrow $dir="down" $m="0 0 6px" />
              <Handle />
            </VScroll>
          </SheetRow>
          <HScroll>
            <HArrow $dir="l" $ml={5} />
            <HThumb><svg width="7" height="8" viewBox="0 0 7 8"><path d="M.5 0v8M3.5 0v8M6.5 0v8" stroke="#555" /></svg></HThumb>
            <HArrow $dir="r" $ml={629} />
            <SplitBar />
          </HScroll>
          <TabRow>
            <Nav viewBox="0 0 60 17">
              <path d="M4 5v7M10 5 6 8.5l4 3.5z M23 5l-4 3.5 4 3.5z M33 5l4 3.5-4 3.5z M44 5l4 3.5-4 3.5zM50 5v7" fill="#aaa" stroke="#aaa" />
            </Nav>
            <Plus>+</Plus>
            <Tab>Sheet1</Tab>
          </TabRow>
        </MainCol>
        <Side>
          <Svg s={20}>{I.menuLines}</Svg>
          <SideIcon $boxed $h={30} $mt={11}><Svg s={26}>{I.wrench}</Svg></SideIcon>
          <SideIcon $h={26} $mt={8}><Svg>{I.styleT}</Svg></SideIcon>
          <SideIcon $h={26} $mt={4}><Svg>{I.gallery}</Svg></SideIcon>
          <SideIcon $h={26} $mt={7}><Svg>{I.compass}</Svg></SideIcon>
          <SideIcon $h={26} $mt={7}><Svg>{I.fx}</Svg></SideIcon>
        </Side>
      </Work>
      <StatusBar>
        <StatusCell $w={240} $pl={8}>Sheet 1 of 1</StatusCell>
        <StatusCell $w={237} />
        <StatusCell $w={216} $pl={7}>Default</StatusCell>
        <StatusCell $w={64} />
        <StatusCell $w={27} $c><Svg s={14}><rect x="4" y="6" width="13" height="12" fill="#888" /><path d="M20 6v12" stroke="#888" /></Svg></StatusCell>
        <StatusCell $w={27} $c><Svg s={14}><path d="M5 3h14v18H5z" stroke="#aaa" /><path d="M9 12l3 4 5-8" stroke="#aaa" /></Svg></StatusCell>
        <StatusCell $w={28} />
        <StatusCell $w={265} $pl={92}>Average: ; Sum: 0</StatusCell>
        <StatusCell $w={135} $pl={13}>
          <span>–</span><ZoomTrack><ZoomKnob /></ZoomTrack><span>+</span><ZoomGap />
        </StatusCell>
        <StatusCell $w={41} $pl={7} $noBorder>100%</StatusCell>
      </StatusBar>
      <Letterbox />
    </Page>
  );
}
